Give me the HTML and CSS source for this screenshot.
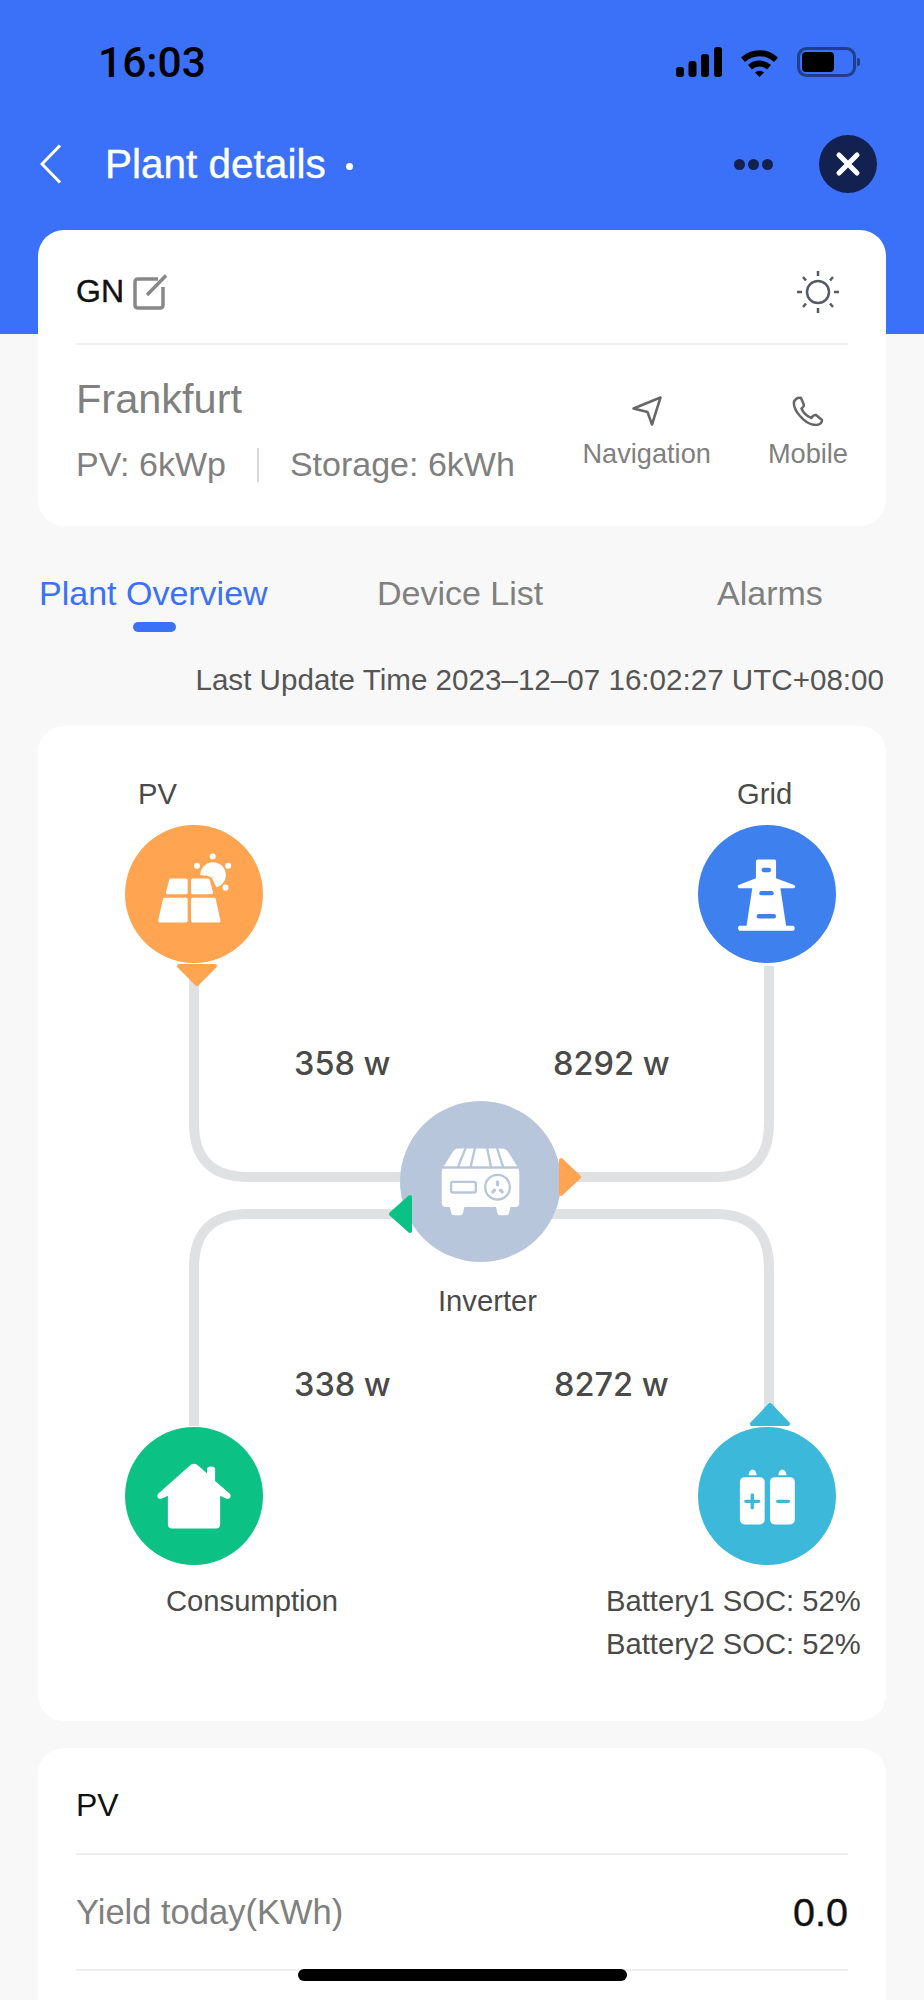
FILE: index.html
```html
<!doctype html>
<html lang="en">
<head>
<meta charset="UTF-8">
<title>Plant details</title>
<link rel="stylesheet" href="styles.css">
</head>
<body>
<div class="page">
	<header class="hero">
		<div class="status">
			<span class="time">16:03</span>
			<div class="status-icons">
				<svg width="46" height="30" viewBox="0 0 46 30"><rect x="0" y="20" width="8" height="10" rx="3"/><rect x="12.500" y="14" width="8" height="16" rx="3"/><rect x="25" y="7" width="8" height="23" rx="3"/><rect x="38" y="0" width="8" height="30" rx="3"/></svg>
				<svg width="39" height="30" viewBox="0 0 39 30"><path d="M1 10.500A27 27 0 0 1 38 10.500L34 15A21 21 0 0 0 5 15Z"/><path d="M8 18A17 17 0 0 1 31 18L27 22.500A11 11 0 0 0 12 22.500Z"/><path d="M15 25.500A6.500 6.500 0 0 1 24 25.500L19.500 30Z"/></svg>
				<svg width="63" height="30" viewBox="0 0 63 30"><rect class="batt-line" x="1.500" y="1.500" width="56" height="27" rx="8"/><rect x="5" y="5" width="32" height="20" rx="4"/><path class="batt-tip" d="M60 11A4 4 0 0 1 60 19Z"/></svg>
			</div>
		</div>
		<div class="nav">
			<svg class="back" width="22" height="40" viewBox="0 0 22 40"><path d="M20 1.500L2 20L20 38.500"/></svg>
			<h1>Plant details</h1>
			<i class="nav-dot"></i>
			<div class="capsule">
				<span class="more"><i></i><i></i><i></i></span>
				<svg class="close" width="58" height="58" viewBox="0 0 58 58"><circle cx="29" cy="29" r="29"/><path d="M20 20L38 38M38 20L20 38"/></svg>
			</div>
		</div>
	</header>

	<section class="card info">
		<div class="info-top">
			<div class="info-name">
				<b>GN</b>
				<svg class="edit" width="36" height="36" viewBox="0 0 36 36"><path d="M25 5H5Q2 5 2 8V31Q2 34 5 34H27Q30 34 30 31V13"/><path d="M14 21L33 1.500"/></svg>
			</div>
			<svg class="sun" width="44" height="44" viewBox="0 0 44 44"><circle cx="22" cy="22" r="11"/><path d="M22 1V6M22 38V43M1 22H6M38 22H43M7 7L10 10.500M37 7L34 10.500M7 37L10 33.500M37 37L34 33.500"/></svg>
		</div>
		<div class="info-body">
			<div class="info-main">
				<h2>Frankfurt</h2>
				<p class="specs"><span>PV: 6kWp</span><i class="spec-sep"></i><span>Storage: 6kWh</span></p>
			</div>
			<div class="action action-nav">
				<svg width="30" height="30" viewBox="0 0 30 30"><path d="M1.500 12.500L28.500 1.500L20 28.500L15.500 16Z"/></svg>
				<span>Navigation</span>
			</div>
			<div class="action">
				<svg width="32" height="30" viewBox="0 0 32 30"><path d="M2 5.500Q5 0.500 9 2L12 9Q12 11 9.500 12.500Q12 19 19.500 22Q21.500 18.500 24 19L30 24Q30 28 25 29Q16 29.500 8 20Q1 12 2 5.500Z"/></svg>
				<span>Mobile</span>
			</div>
		</div>
	</section>

	<nav class="tabs">
		<a class="tab tab-on">Plant Overview</a>
		<a class="tab">Device List</a>
		<a class="tab">Alarms</a>
	</nav>
	<p class="updated">Last Update Time 2023–12–07 16:02:27 UTC+08:00</p>

	<section class="card flow">
		<svg class="lines" width="848" height="995" viewBox="0 0 848 995">
			<path d="M156 240V397Q156 451 210 451H400"/>
			<path d="M731 240V397Q731 451 677 451H480"/>
			<path d="M156 700V542Q156 488 210 488H400"/>
			<path d="M731 700V542Q731 488 677 488H480"/>
		</svg>

		<span class="lbl lbl-pv">PV</span>
		<span class="lbl lbl-grid">Grid</span>
		<span class="lbl lbl-inv">Inverter</span>
		<span class="lbl lbl-cons">Consumption</span>
		<span class="lbl lbl-batt">Battery1 SOC: 52%<br>Battery2 SOC: 52%</span>

		<span class="val val-a">358 w</span>
		<span class="val val-b">8292 w</span>
		<span class="val val-c">338 w</span>
		<span class="val val-d">8272 w</span>

		<svg class="node node-pv" viewBox="77 197 412 412">
			<circle cx="283" cy="403" r="206" fill="#ffa552"/>
			<g class="solid">
				<path d="M214 362H259V399H204Z"/>
				<path d="M279 362H325L335 399H279Z"/>
				<path d="M195 419H259V483H181Z"/>
				<path d="M279 419H343L357 483H279Z"/>
			</g>
			<path d="M302 347A38 38 0 1 1 350 383L336 354Q322 346 302 347Z" fill="#fff"/>
			<circle cx="339" cy="291" r="9" fill="#fff"/>
			<circle cx="292" cy="319" r="9" fill="#fff"/>
			<circle cx="385" cy="319" r="9" fill="#fff"/>
			<circle cx="377" cy="384" r="9" fill="#fff"/>
		</svg>

		<svg class="node node-grid" viewBox="117 197 412 412">
			<circle cx="323" cy="403" r="206" fill="#3f80ef"/>
			<path d="M296 300H345Q350 300 350 306V356L404 376Q411 382 403 386H363L380 498H402Q410 505 402 513H240Q232 505 240 498H262L279 386H240Q232 382 238 376L290 356V306Q290 300 296 300Z" fill="#fff"/>
			<rect x="307" y="325" width="28" height="13" rx="6.500" fill="#3f80ef"/>
			<rect x="300" y="394" width="43" height="13" rx="6.500" fill="#3f80ef"/>
			<rect x="292" y="463" width="58" height="13" rx="6.500" fill="#3f80ef"/>
		</svg>

		<svg class="node node-inv" viewBox="121 63 482 482">
			<circle cx="362" cy="304" r="241" fill="#b8c6dc"/>
			<path d="M296 205H426Q438 205 445 216L474 262Q478 268 478 276V368Q478 380 466 380H452L447 400Q446 405 440 405H420Q414 405 413 400L408 380H314L309 400Q308 405 302 405H282Q276 405 275 400L270 380H258Q246 380 246 368V276Q246 268 250 262L279 216Q285 205 296 205Z" fill="#fff"/>
			<path class="cut" d="M252 262H474M317 205L294 262M345 205L332 262M382 205L394 262M412 205L430 262"/>
			<rect class="cut" x="274" y="305" width="74" height="32" rx="5"/>
			<circle class="cut" cx="413" cy="321" r="37"/>
			<path class="cut cut-pin" d="M413 305V314M399 335L404 330M427 335L422 330"/>
		</svg>

		<svg class="node node-cons" viewBox="77 142 412 412">
			<circle cx="283" cy="348" r="206" fill="#0bc284"/>
			<path d="M283 252Q276 252 270 258L176 341Q170 350 178 356Q186 358 205 347V432Q205 445 218 445H348Q361 445 361 432V347Q380 358 388 356Q396 350 390 341L346 303V268Q346 260 334 260Q322 260 322 268V281L296 258Q290 252 283 252Z" fill="#fff"/>
		</svg>

		<svg class="node node-batt" viewBox="117 142 412 412">
			<circle cx="323" cy="348" r="206" fill="#3bb8da"/>
			<path d="M268 286A12 17 0 0 1 292 286ZM357 286A12 17 0 0 1 381 286Z" fill="#fff"/>
			<rect x="242" y="292" width="74" height="141" rx="14" fill="#fff"/>
			<rect x="332" y="292" width="74" height="141" rx="14" fill="#fff"/>
			<path d="M260 364H298M279 345V383M355 364H387" stroke="#3bb8da" stroke-width="10" stroke-linecap="round"/>
		</svg>

		<svg class="arrow arrow-pv" width="42" height="23" viewBox="0 0 42 23"><path d="M3 2H39L21 20Z"/></svg>
		<svg class="arrow arrow-batt" width="42" height="23" viewBox="0 0 42 23"><path d="M3 21H39L21 2Z"/></svg>
		<svg class="arrow arrow-grid" width="23" height="40" viewBox="0 0 23 40"><path d="M2 3V37L20 20Z"/></svg>
		<svg class="arrow arrow-cons" width="24" height="40" viewBox="0 0 24 40"><path d="M22 3V37L3 20Z"/></svg>
	</section>

	<section class="card stats">
		<h3>PV</h3>
		<div class="stat-row">
			<span>Yield today(KWh)</span>
			<b>0.0</b>
		</div>
		<hr class="stat-line">
	</section>

	<div class="home-bar"></div>
</div>
</body>
</html>
```

FILE: styles.css
```css
*{
	margin:0;
	padding:0;
	box-sizing:border-box;
}
body{
	background-color:#F8F8F8;
	font-family:"Liberation Sans",Arial,sans-serif;
}
.page{
	position:relative;
	width:924px;
	height:2000px;
	overflow:hidden;
	background-color:#F8F8F8;
}

/* blue top area */
.hero{
	height:334px;
	background-color:#3B71F9;
}
.status{
	display:flex;
	justify-content:space-between;
	align-items:center;
	height:124px;
	padding:0 64px 0 98px;
}
.time{
	font-family:Roboto,sans-serif;
	font-size:42.500px;
	font-weight:500;
	color:#000;
}
.status-icons{
	display:flex;
	align-items:center;
	gap:18px;
}
.batt-line{
	fill:none;
	stroke:#000;
	stroke-opacity:.45;
	stroke-width:3;
}
.batt-tip{
	opacity:.45;
}
.nav{
	display:flex;
	align-items:center;
	height:80px;
	padding:0 47px 0 40px;
}
.back{
	flex:none;
}
.back path{
	fill:none;
	stroke:#fff;
	stroke-width:3;
}
h1{
	margin-left:43px;
	font-size:40.500px;
	font-weight:400;
	color:#fff;
	-webkit-text-stroke:.4px #fff;
}
.nav-dot{
	width:7px;
	height:7px;
	margin:4px 0 0 20px;
	border-radius:50%;
	background-color:#fff;
}
.capsule{
	display:flex;
	align-items:center;
	gap:46px;
	margin-left:auto;
}
.more{
	display:flex;
	gap:3px;
}
.more i{
	width:11px;
	height:11px;
	border-radius:50%;
	background-color:#12214F;
}
.close{
	display:block;
}
.close circle{
	fill:#12214F;
}
.close path{
	fill:none;
	stroke:#fff;
	stroke-width:5;
	stroke-linecap:round;
}

.card{
	margin:0 38px;
	background-color:#fff;
	border-radius:26px;
}

/* plant card */
.info{
	height:296px;
	margin-top:-104px;
	padding:0 38px;
}
.info-top{
	display:flex;
	justify-content:space-between;
	align-items:center;
	height:115px;
	padding-top:10px;
	border-bottom:2px solid #F0F0F0;
}
.info-name{
	display:flex;
	align-items:center;
	gap:9px;
	font-size:32px;
	color:#111;
}
.info-name b{
	font-weight:400;
	-webkit-text-stroke:.4px #111;
}
.edit path{
	fill:none;
	stroke:#888;
	stroke-width:3.500;
}
.sun{
	margin-right:8px;
}
.sun circle,.sun path{
	fill:none;
	stroke:#555A66;
	stroke-width:2.500;
}
.info-body{
	display:flex;
	align-items:flex-start;
	padding-top:31px;
	color:#808080;
}
.info-main{
	flex:1;
}
h2{
	font-size:41.500px;
	font-weight:400;
	line-height:46px;
}
.specs{
	display:flex;
	align-items:center;
	margin-top:23px;
	font-size:34px;
}
.spec-sep{
	width:2px;
	height:34px;
	margin:0 31px;
	background-color:#D8D8D8;
}
.action{
	display:flex;
	flex-direction:column;
	align-items:center;
	gap:12px;
	margin-top:20px;
	font-size:27.200px;
}
.action-nav{
	margin-right:57px;
}
.action svg{
	display:block;
}
.action path{
	fill:none;
	stroke:#666;
	stroke-width:2.500;
	stroke-linejoin:round;
}

/* tabs */
.tabs{
	display:grid;
	grid-template-columns:338px 340px auto;
	height:118px;
	padding:49px 0 0 39px;
}
.tab{
	position:relative;
	height:37px;
	font-size:34px;
	line-height:37px;
	color:#808080;
}
.tab-on{
	color:#3B71F9;
}
.tab-on::after{
	content:"";
	position:absolute;
	left:94px;
	top:47px;
	width:43px;
	height:10px;
	border-radius:5px;
	background-color:#3B71F9;
}
.updated{
	height:82px;
	padding:17px 40px 0 0;
	font-size:29.600px;
	line-height:38px;
	text-align:right;
	color:#555;
}

/* energy flow diagram */
.flow{
	position:relative;
	height:995px;
}
.lines{
	position:absolute;
	left:0;
	top:0;
}
.lines path{
	fill:none;
	stroke:#E0E1E3;
	stroke-width:10;
}
.node{
	position:absolute;
	width:138px;
	height:138px;
}
.node-pv{left:87px;top:99px;}
.node-grid{left:660px;top:99px;}
.node-inv{left:362px;top:375px;width:161px;height:161px;}
.node-cons{left:87px;top:701px;}
.node-batt{left:660px;top:701px;}
.solid path{
	fill:#fff;
	stroke:#fff;
	stroke-width:10;
	stroke-linejoin:round;
}
.cut{
	fill:none;
	stroke:#B8C6DC;
	stroke-width:7;
	stroke-linecap:round;
}
.cut-pin{
	stroke-width:10;
}
.arrow{
	position:absolute;
	stroke-width:4;
	stroke-linejoin:round;
}
.arrow-pv{left:138px;top:238px;}
.arrow-pv path{fill:#FFA552;stroke:#FFA552;}
.arrow-batt{left:711px;top:677px;}
.arrow-batt path{fill:#3BB8DA;stroke:#3BB8DA;}
.arrow-grid{left:521px;top:431px;}
.arrow-grid path{fill:#FFA552;stroke:#FFA552;}
.arrow-cons{left:350px;top:468px;}
.arrow-cons path{fill:#0BC284;stroke:#0BC284;}
.lbl{
	position:absolute;
	font-size:29.200px;
	line-height:43px;
	color:#4A4A4A;
}
.lbl-pv{left:100px;top:47px;}
.lbl-grid{left:699px;top:47px;}
.lbl-inv{left:400px;top:554px;}
.lbl-cons{left:128px;top:854px;}
.lbl-batt{left:568px;top:854px;}
.val{
	position:absolute;
	font-family:Inter,sans-serif;
	font-size:32.500px;
	font-weight:500;
	line-height:40px;
	color:#4A4A4A;
}
.val-a{left:256px;top:318px;}
.val-b{left:515px;top:318px;}
.val-c{left:256px;top:639px;}
.val-d{left:516px;top:639px;}

/* pv card */
.stats{
	height:300px;
	margin-top:27px;
	padding:0 38px;
}
h3{
	height:107px;
	border-bottom:2px solid #F0F0F0;
	font-size:32px;
	font-weight:400;
	line-height:114px;
	color:#111;
}
.stat-row{
	display:flex;
	justify-content:space-between;
	align-items:center;
	height:114px;
	font-size:34.500px;
	color:#808080;
}
.stat-row b{
	font-size:39.500px;
	font-weight:400;
	color:#111;
	-webkit-text-stroke:.4px #111;
}
.stat-line{
	border:0;
	border-top:2px solid #F0F0F0;
}
.home-bar{
	position:absolute;
	left:298px;
	top:1969px;
	width:329px;
	height:12px;
	border-radius:6px;
	background-color:#000;
}
```
